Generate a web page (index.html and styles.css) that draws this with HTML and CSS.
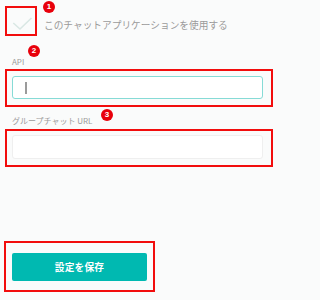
FILE: index.html
```html
<!DOCTYPE html>
<html lang="ja">
<head>
<meta charset="utf-8">
<link rel="stylesheet" href="styles.css">
</head>
<body>
<div class="page">
  <div class="row-check">
    <div class="hl check-box">
      <svg class="check" width="28" height="26" viewBox="0 0 28 26"><polyline points="8.3,17 15,23 26.5,12" fill="none" stroke="#d9e7e4" stroke-width="1.6"/></svg>
    </div>
    <span class="check-label">このチャットアプリケーションを使用する</span>
  </div>

  <div class="label label-api">API</div>
  <div class="hl field-box field-api">
    <div class="input input-active"><span class="caret"></span></div>
  </div>

  <div class="label label-url">グループチャット URL</div>
  <div class="hl field-box field-url">
    <div class="input input-idle"></div>
  </div>

  <div class="hl btn-box">
    <div class="btn">設定を保存</div>
  </div>

  <span class="badge badge-1">1</span>
  <span class="badge badge-2">2</span>
  <span class="badge badge-3">3</span>
</div>
</body>
</html>
```
FILE: styles.css
```css
html, body {
  margin: 0;
  padding: 0;
  background: #fafbfb;
}
.page {
  position: relative;
  width: 282px;
  height: 300px;
  font-family: "Noto Sans CJK JP", "Noto Sans", sans-serif;
  color: #9a9a9a;
  padding-top: 6px;
  box-sizing: border-box;
}
.hl {
  border: 2px solid #f20d0d;
  box-sizing: border-box;
}
.row-check {
  display: flex;
  align-items: flex-start;
  margin-left: 5px;
}
.check-box {
  width: 32px;
  height: 30px;
  position: relative;
}
.check {
  display: block;
  margin: -2px 0 0 -2px;
}
.check-label {
  margin-left: 7px;
  margin-top: 12px;
  font-size: 9.7px;
  line-height: 14px;
  white-space: nowrap;
}
.label {
  font-size: 8px;
  line-height: 10px;
  margin-left: 12px;
  white-space: nowrap;
}
.label-api { margin-top: 21px; }
.label-url { margin-top: 9px; }
.field-box {
  margin-left: 5px;
  width: 268px;
  padding: 5px 8px 6px 5px;
}
.field-api { margin-top: 2px; }
.field-url { margin-top: 3px; padding-top: 4px; }
.input {
  box-sizing: border-box;
  border-radius: 3px;
  background: #fff;
  display: flex;
  align-items: center;
}
.input-active {
  height: 23px;
  border: 1px solid #86dbd6;
  padding-left: 12px;
}
.input-idle {
  height: 24px;
  border: 1px solid #efefef;
}
.caret {
  display: block;
  width: 1.5px;
  height: 12px;
  background: #9b9b9b;
}
.btn-box {
  margin-top: 74px;
  margin-left: 4px;
  width: 151px;
  padding: 10px 6px 9px 6px;
}
.btn {
  height: 28px;
  background: #00b9b1;
  border-radius: 2px;
  color: #fff;
  font-weight: bold;
  font-size: 9.7px;
  display: flex;
  align-items: center;
  justify-content: center;
  letter-spacing: 0.2px;
}
.badge {
  position: absolute;
  width: 12px;
  height: 12px;
  border-radius: 50%;
  background: #e8000b;
  color: #fff;
  font-family: "Liberation Sans", sans-serif;
  font-weight: bold;
  font-size: 8px;
  line-height: 12px;
  text-align: center;
}
.badge-1 { left: 43px; top: 1px; }
.badge-2 { left: 28px; top: 45px; }
.badge-3 { left: 101px; top: 109px; }
```
